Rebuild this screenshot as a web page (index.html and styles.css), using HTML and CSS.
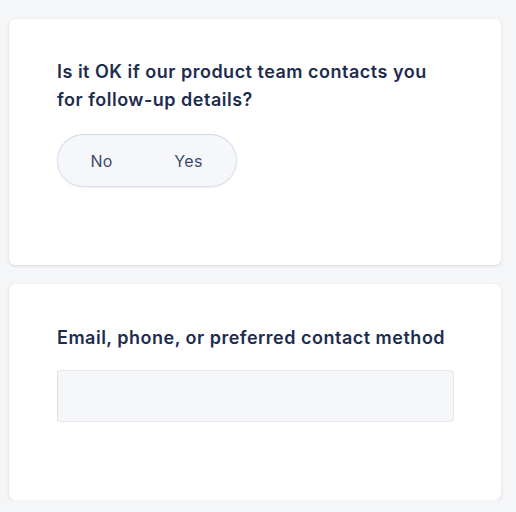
FILE: index.html
```html
<!DOCTYPE html>
<html lang="en">
<head>
<meta charset="utf-8">
<link rel="stylesheet" href="styles.css">
</head>
<body>
<main class="page">
  <section class="card card-consent">
    <h2 class="question">Is it OK if our product team contacts you for follow-up details?</h2>
    <div class="toggle">
      <button class="toggle-option">No</button>
      <button class="toggle-option toggle-yes">Yes</button>
    </div>
  </section>
  <section class="card card-contact">
    <label class="question" for="contact">Email, phone, or preferred contact method</label>
    <input class="text-input" id="contact" type="text">
  </section>
</main>
</body>
</html>
```
FILE: styles.css
```css
html, body {
  margin: 0;
  padding: 0;
  background: #f5f6f8;
  font-family: Inter, "Noto Sans", sans-serif;
}
.page {
  display: flex;
  flex-direction: column;
  gap: 19px;
  padding: 19px 15px 0 9px;
}
.card {
  background: #ffffff;
  border-radius: 6px;
  box-shadow: 0 1px 3px rgba(30, 40, 60, 0.14), 0 0 1px rgba(30, 40, 60, 0.06);
  display: flex;
  flex-direction: column;
  align-items: flex-start;
  padding: 0 48px;
  box-sizing: border-box;
}
.card-consent {
  height: 246px;
  padding-top: 39px;
}
.card-contact {
  height: 216px;
  padding-top: 40px;
}
.question {
  margin: 0;
  font-size: 18px;
  line-height: 28px;
  font-weight: 600;
  letter-spacing: 0.5px;
  color: #1d2d4e;
  max-width: 385px;
  display: block;
}
.card-contact .question {
  max-width: none;
}
.toggle {
  margin-top: 20px;
  width: 180px;
  height: 53px;
  box-sizing: border-box;
  border: 1px solid #d9e0ea;
  border-top-color: #cfd9ea;
  border-radius: 27px;
  background: #f5f7fa;
  display: flex;
  box-shadow: 0 1px 2px rgba(30, 40, 60, 0.06);
}
.toggle-option {
  flex: 1;
  border: 0;
  background: transparent;
  font-family: inherit;
  font-size: 16px;
  letter-spacing: 0.3px;
  color: #3e4b67;
  padding: 0;
  cursor: pointer;
}
.toggle-yes {
  padding-right: 4px;
}
.text-input {
  margin-top: 18px;
  width: 397px;
  height: 52px;
  box-sizing: border-box;
  background: #f5f6f8;
  border: 1px solid #e4e7ec;
  border-left-color: #d9dfe9;
  border-radius: 3px;
  outline: none;
  font-family: inherit;
  font-size: 15px;
}
```
